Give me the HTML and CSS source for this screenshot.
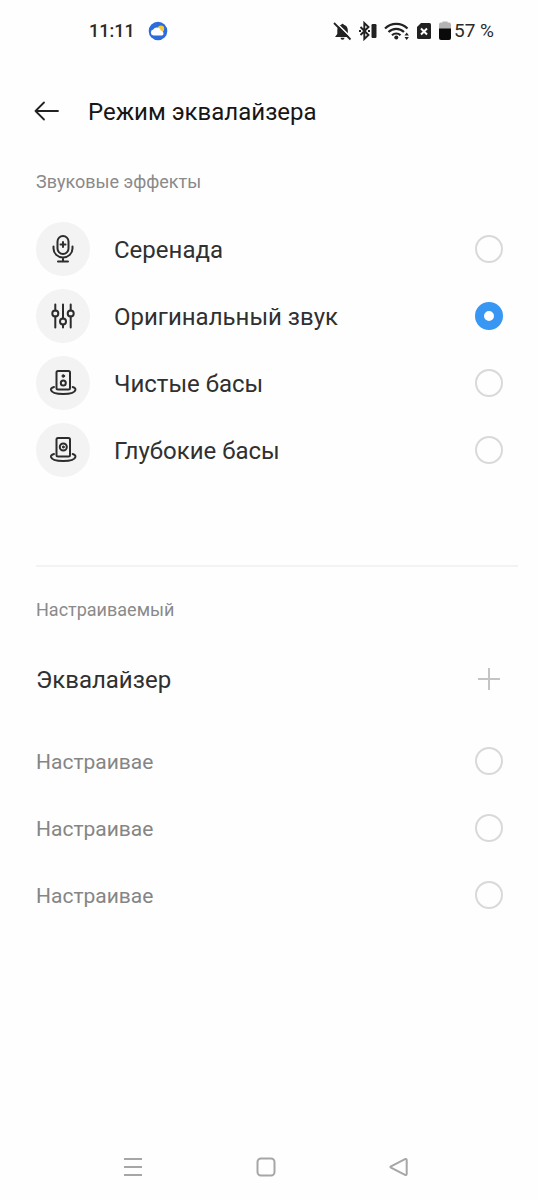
FILE: index.html
```html
<!DOCTYPE html>
<html lang="ru">
<head>
<meta charset="utf-8">
<meta name="viewport" content="width=device-width, initial-scale=1">
<title>Режим эквалайзера</title>
<link rel="stylesheet" href="styles.css">
</head>
<body>
<div class="status">
  <span class="status-time">11:11</span>
  <svg class="status-weather" width="20" height="20" viewBox="0 0 20 20" aria-hidden="true">
    <circle cx="10" cy="10" r="9.3" fill="#2b6bdc"/>
    <circle cx="13" cy="7.8" r="3.2" fill="#f6c83c"/>
    <path d="M5.500 14.500a3 3 0 0 1-.3-5.900 4.200 4.200 0 0 1 7.700 1.200 2.500 2.500 0 0 1 1.300 4.700z" fill="#fff"/>
  </svg>
  <div class="status-icons">
    <svg width="19" height="20" viewBox="0 0 19 20" aria-hidden="true">
      <path d="M2 16 4.300 13V9c0-3 1.700-4.800 4-5.300a1.300 1.300 0 0 1 2.500 0c2.300.6 4 2.500 4 5.300v4l2.200 3zM7.500 16.800h4a2 2 0 0 1-4 0z" fill="#222"/>
      <path d="M2.500 1 19 17.500" stroke="#fff" stroke-width="1.600"/>
      <path d="M1 2 17.500 18.500" stroke="#222" stroke-width="1.800"/>
    </svg>
    <svg width="20" height="20" viewBox="0 0 20 20" aria-hidden="true">
      <path d="m2.500 6 8 8-4.200 4V2l4.200 4-8 8" fill="none" stroke="#222" stroke-width="1.900"/>
      <path d="M1 10h2M10 10h2" stroke="#222" stroke-width="1.800"/>
      <rect x="13.500" y="3" width="5" height="14" rx="1.200" fill="#222"/>
    </svg>
    <svg width="26" height="20" viewBox="0 0 26 20" aria-hidden="true">
      <g fill="none" stroke="#222" stroke-width="2.200">
        <path d="M1 7.500a16 16 0 0 1 22.500 0M4.500 11a11 11 0 0 1 15.500 0M8 14.200a6.200 6.200 0 0 1 8.500 0"/>
      </g>
      <circle cx="12.300" cy="16.500" r="2" fill="#222"/>
      <path d="m22.700 11.500 2.200 3h-4.400zM22.700 19l2.200-3h-4.400z" fill="#222"/>
    </svg>
    <svg width="16" height="20" viewBox="0 0 16 20" aria-hidden="true">
      <path d="M5 2h8.500A1.500 1.500 0 0 1 15 3.500v13a1.500 1.500 0 0 1-1.500 1.500h-11A1.500 1.500 0 0 1 1 16.500V6z" fill="#222"/>
      <path d="m5 7.500 6 6m0-6-6 6" stroke="#fff" stroke-width="2"/>
    </svg>
    <svg width="14" height="20" viewBox="0 0 14 20" aria-hidden="true">
      <path d="M1 8.500V3.500a2 2 0 0 1 2-2h1.500V.5h5v1H11a2 2 0 0 1 2 2v5z" fill="#b4b4b4"/>
      <path d="M1 7.500h12V17a2 2 0 0 1-2 2H3a2 2 0 0 1-2-2z" fill="#0a0a0a"/>
    </svg>
  </div>
  <span class="status-battery">57 %</span>
</div>

<header class="header">
  <button class="icon-button" type="button" aria-label="Назад">
    <svg width="26" height="24" viewBox="0 0 26 24" fill="none" stroke="#222" stroke-width="1.800" stroke-linecap="round" stroke-linejoin="round" aria-hidden="true">
      <path d="M24 12H1.500M10 3.500 1.500 12l8.500 8.500"/>
    </svg>
  </button>
  <h1 class="title">Режим эквалайзера</h1>
</header>

<main class="content">
  <section>
    <h2 class="section-label">Звуковые эффекты</h2>
    <label class="row">
      <span class="row-icon">
        <svg width="30" height="30" viewBox="0 0 30 30" class="glyph" aria-hidden="true">
          <rect x="9.500" y="2" width="11" height="18" rx="5.500"/>
          <path d="M5.500 12.500v2a9.500 9 0 0 0 19 0v-2M15 23.500v4M10 27.500h10M15 8v5M12.500 10.500h5"/>
        </svg>
      </span>
      <span class="row-text">Серенада</span>
      <input class="radio" type="radio" name="mode">
    </label>
    <label class="row">
      <span class="row-icon">
        <svg width="30" height="30" viewBox="0 0 30 30" class="glyph" aria-hidden="true">
          <path d="M7.300 3.500v6M7.300 15.500v11M15 3.500v14M15 23.500v3M22.700 3.500v6M22.700 15.500v11"/>
          <circle cx="7.300" cy="12.500" r="3"/><circle cx="15" cy="20.500" r="3"/><circle cx="22.700" cy="12.500" r="3"/>
        </svg>
      </span>
      <span class="row-text">Оригинальный звук</span>
      <input class="radio" type="radio" name="mode" checked>
    </label>
    <label class="row">
      <span class="row-icon">
        <svg width="30" height="30" viewBox="0 0 30 30" class="glyph" aria-hidden="true">
          <rect x="8.500" y="3" width="13.500" height="18.500" rx="1.500"/>
          <circle cx="15.300" cy="8" r="1.300" class="glyph-dot"/><circle cx="15.300" cy="15" r="2.500"/>
          <path d="M6 19C3.500 19.700 2.700 20.500 3 22c.6 2.400 5.500 4 12.200 4s11.600-1.600 12.200-4c.3-1.500-.5-2.300-2.700-3"/>
        </svg>
      </span>
      <span class="row-text">Чистые басы</span>
      <input class="radio" type="radio" name="mode">
    </label>
    <label class="row">
      <span class="row-icon">
        <svg width="30" height="30" viewBox="0 0 30 30" class="glyph" aria-hidden="true">
          <rect x="8.500" y="3" width="13.500" height="18.500" rx="1.500"/>
          <circle cx="15.300" cy="12" r="3.500"/><circle cx="15.300" cy="12" r="1" class="glyph-dot"/>
          <path d="M6 19C3.500 19.700 2.700 20.500 3 22c.6 2.400 5.500 4 12.200 4s11.600-1.600 12.200-4c.3-1.500-.5-2.300-2.700-3"/>
        </svg>
      </span>
      <span class="row-text">Глубокие басы</span>
      <input class="radio" type="radio" name="mode">
    </label>
  </section>

  <hr class="divider">

  <section>
    <h2 class="section-label">Настраиваемый</h2>
    <div class="row row-add">
      <span class="row-text">Эквалайзер</span>
      <button class="icon-button" type="button" aria-label="Добавить">
        <svg width="28" height="28" viewBox="0 0 28 28" fill="none" stroke="#c4c4c4" stroke-width="2" aria-hidden="true">
          <path d="M14 3v22M3 14h22"/>
        </svg>
      </button>
    </div>
    <label class="row row-custom"><span class="row-text">Настраивае</span><input class="radio" type="radio" name="mode"></label>
    <label class="row row-custom"><span class="row-text">Настраивае</span><input class="radio" type="radio" name="mode"></label>
    <label class="row row-custom"><span class="row-text">Настраивае</span><input class="radio" type="radio" name="mode"></label>
  </section>
</main>

<nav class="navbar" aria-label="Навигация">
  <button class="icon-button" type="button" aria-label="Недавние">
    <svg class="nav-glyph" width="20" height="20" viewBox="0 0 20 20" aria-hidden="true"><path d="M1 2h18M1 10h18M1 18h18"/></svg>
  </button>
  <button class="icon-button" type="button" aria-label="Домой">
    <svg class="nav-glyph" width="20" height="20" viewBox="0 0 20 20" aria-hidden="true"><rect x="1.500" y="1.500" width="17" height="17" rx="3.500"/></svg>
  </button>
  <button class="icon-button" type="button" aria-label="Назад">
    <svg class="nav-glyph" width="20" height="20" viewBox="0 0 20 20" aria-hidden="true"><path d="M2 9.300 16 2.200q1.700-.7 1.700 1v13.600q0 1.700-1.700 1L2 10.700q-1.200-.7 0-1.400z"/></svg>
  </button>
</nav>
</body>
</html>
```

FILE: styles.css
```css
* {
  box-sizing: border-box;
}

body {
  margin: 0;
  min-height: 100vh;
  display: flex;
  flex-direction: column;
  background: #fefefe;
  color: #303030;
  font-family: Roboto, "Noto Sans", sans-serif;
}

.status {
  display: flex;
  align-items: center;
  height: 61px;
  padding: 0 43px 0 89px;
  font-size: 19px;
  color: #2b2b2b;
}

.status-time {
  font-size: 18px;
  font-weight: 500;
}

.status-weather {
  margin-left: 13px;
}

.status-icons {
  display: flex;
  gap: 6px;
  margin-left: auto;
}

.status-battery {
  margin-left: 2px;
}

.header {
  display: flex;
  align-items: center;
  gap: 28px;
  height: 99px;
  padding: 0 34px;
}

.title {
  margin: 0;
  padding-top: 2px;
  font-size: 24px;
  font-weight: 400;
  color: #161616;
}

.icon-button {
  display: flex;
  padding: 0;
  border: 0;
  background: none;
}

.section-label {
  margin: 0;
  padding: 0 36px;
  font-size: 18px;
  line-height: 44px;
  font-weight: 400;
  color: #8a8a8a;
}

.row {
  display: flex;
  align-items: center;
  height: 67px;
  padding: 0 34px 0 36px;
  font-size: 24px;
}

.row-text {
  flex: 1;
  padding-top: 2px;
}

.row-icon {
  display: flex;
  align-items: center;
  justify-content: center;
  width: 54px;
  height: 54px;
  margin-right: 24px;
  border-radius: 50%;
  background: #f3f3f3;
}

.section-label + .row {
  margin-top: 11px;
}

.section-label + .row-add {
  margin-top: 13px;
  margin-bottom: 15px;
}

.row-custom {
  font-size: 21px;
  color: #858585;
}

.glyph {
  fill: none;
  stroke: #2c2c2c;
  stroke-width: 2;
  stroke-linecap: round;
  stroke-linejoin: round;
}

.glyph-dot {
  fill: #2c2c2c;
  stroke-width: 1;
}

.radio {
  appearance: none;
  width: 28px;
  height: 28px;
  margin: 0;
  border: 2px solid #d9d9d9;
  border-radius: 50%;
}

.radio:checked {
  border: 9px solid #3797f2;
}

.divider {
  height: 2px;
  margin: 82px 19px 21px 36px;
  border: 0;
  background: #f3f3f3;
}

.navbar {
  display: grid;
  grid-template-columns: repeat(3, 1fr);
  justify-items: center;
  align-items: center;
  height: 66px;
  margin-top: auto;
  padding: 0 72px 0 66px;
}

.nav-glyph {
  fill: none;
  stroke: #a6a6a6;
  stroke-width: 2;
}
```
